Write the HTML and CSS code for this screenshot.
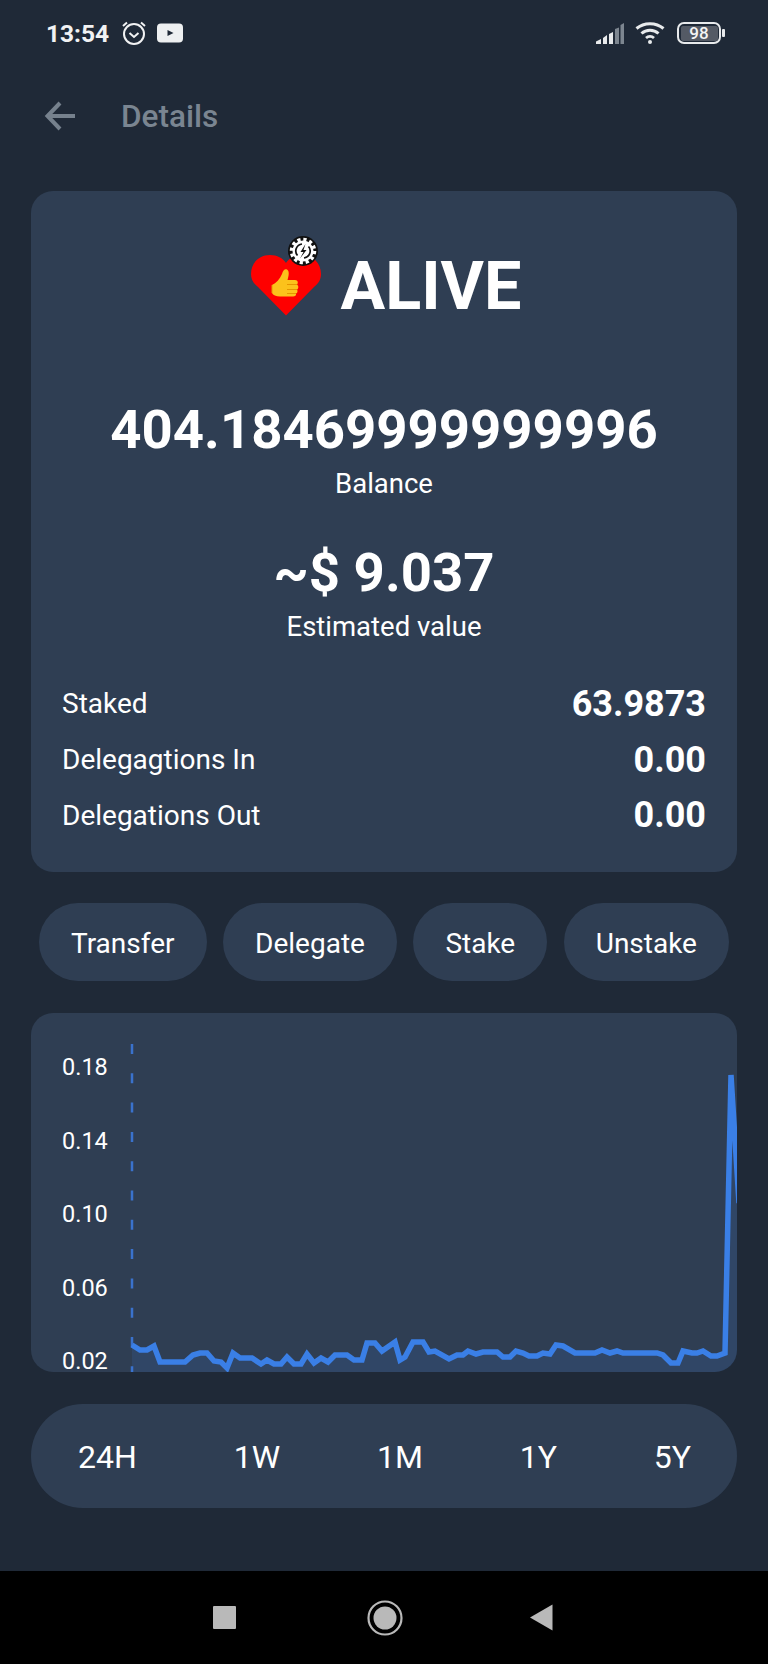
FILE: index.html
```html
<!DOCTYPE html>
<html lang="en">

<head>
    <meta charset="UTF-8">
    <meta name="viewport" content="width=device-width, initial-scale=1.0">
    <title>Details</title>
    <link rel="stylesheet" href="styles.css">
</head>

<body>
    <div class="status-bar">
        <div class="status-left">
            <span class="clock">13:54</span>
            <svg class="alarm-icon" viewBox="0 0 26 26" width="26" height="26">
                <circle cx="13" cy="14" r="10" fill="none" stroke="#f1f2f3" stroke-width="2" />
                <path d="M8.500 13l4.500 4 4.500-4" fill="none" stroke="#f1f2f3" stroke-width="2" />
                <path d="M2 6l4-3.500M24 6l-4-3.500" fill="none" stroke="#f1f2f3" stroke-width="2" />
            </svg>
            <svg class="video-icon" viewBox="0 0 26 20" width="26" height="20">
                <rect width="26" height="19" y="0.500" rx="4" fill="#eef0f1" />
                <path d="M10.500 7l6 3-6 3z" fill="#1f2937" />
            </svg>
        </div>
        <div class="status-right">
            <svg class="signal-icon" viewBox="0 0 28 21" width="28" height="21">
                <path d="M0 21v-2.500l5-2.500v5z" fill="#e8eaec" />
                <path d="M7 21v-6l4-3v9z" fill="#e8eaec" />
                <path d="M13 21V11l4-2v12z" fill="#e8eaec" />
                <path d="M19 21V6l4-1.500V21z" fill="#7d8690" />
                <path d="M24.500 21V2L28 0v21z" fill="#7d8690" />
            </svg>
            <svg class="wifi-icon" viewBox="0 0 30 24" width="30" height="24">
                <path d="M1.500 7.500c7.500-6.500 19.500-6.500 27 0" fill="none" stroke="#e8eaec" stroke-width="3" />
                <path d="M6.500 12.500c4.800-4.500 12.200-4.500 17 0" fill="none" stroke="#e8eaec" stroke-width="3" />
                <path d="M11 17c2.300-2 5.700-2 8 0" fill="none" stroke="#e8eaec" stroke-width="2.800" />
                <circle cx="15" cy="21" r="2" fill="#e8eaec" />
            </svg>
            <div class="battery">
                <div class="battery-body"><span>98</span></div>
                <div class="battery-tip"></div>
            </div>
        </div>
    </div>

    <div class="top-bar">
        <svg class="back-arrow" viewBox="0 0 32 30" width="32" height="30">
            <path d="M31 15H4M16 2L3.500 15 16 28" fill="none" stroke="#76818d" stroke-width="4" />
        </svg>
        <h1>Details</h1>
    </div>

    <div class="card summary">
        <div class="token">
            <div class="token-logo">
                <svg viewBox="0 0 70 63" width="70" height="63">
                    <path d="M35 60.500L7 32C2 28 0 24 0 19 0 8 8 0 19 0c7 0 13 3 16 8 3-5 9-8 16-8 11 0 19 8 19 19 0 5-2 9-7 13z" fill="#fe0000" />
                    <path d="M21 30c4-2 8-6 10-11 1-4 3-5.500 5-4.500 2.500 1.500 2 5.500.5 10.500H44c3 0 3.500 3 2 4.500 2 1.500 1.500 4.500 0 5 1 1.500.5 3.500-1 4 .5 2-1 3-3 3H29c-4 0-7-1.500-8-3.500z" fill="#fcc21b" />
                    <path d="M36 29.500h10M36 34.500h10M36 38.500h9M21 30v8" fill="none" stroke="#e59600" stroke-width="1" />
                </svg>
                <svg class="token-badge" viewBox="0 0 30 30" width="30" height="30">
                    <circle cx="15" cy="15" r="15" fill="#111" />
                    <circle cx="15" cy="15" r="11.500" fill="none" stroke="#fff" stroke-width="3.500" stroke-dasharray="3.200 2.820" />
                    <circle cx="15" cy="15" r="10.500" fill="#fff" />
                    <path d="M9.500 19.500a7 7 0 0 1 4.500-11.500M20.500 10.500a7 7 0 0 1-4.500 11.500" fill="none" stroke="#111" stroke-width="1.700" />
                    <path d="M17.500 8l-5 8h3l-3.500 6.500 6.500-8.500h-3z" fill="#111" />
                </svg>
            </div>
            <span class="token-name">ALIVE</span>
        </div>

        <div class="amount">404.18469999999996</div>
        <div class="amount-label">Balance</div>

        <div class="amount amount-usd">~$ 9.037</div>
        <div class="amount-label">Estimated value</div>

        <div class="stat-list">
            <div class="stat"><span>Staked</span><b>63.9873</b></div>
            <div class="stat"><span>Delegagtions In</span><b>0.00</b></div>
            <div class="stat"><span>Delegations Out</span><b>0.00</b></div>
        </div>
    </div>

    <div class="actions">
        <div class="action-btn">Transfer</div>
        <div class="action-btn">Delegate</div>
        <div class="action-btn">Stake</div>
        <div class="action-btn">Unstake</div>
    </div>

    <div class="card chart">
        <div class="chart-axis">
            <span>0.18</span>
            <span>0.14</span>
            <span>0.10</span>
            <span>0.06</span>
            <span>0.02</span>
        </div>
        <svg class="chart-plot" viewBox="0 0 609 359" width="609" height="359">
            <line x1="4" y1="31" x2="4" y2="359" stroke="#3a72cc" stroke-width="2.500" stroke-dasharray="10 19.300" />
            <polygon fill="#3b82f6" fill-opacity="0.12"
                points="4,359 4,332 12,337 19,337 26,333 32,349 57,349 65,342 72,340 79,340 86,348 93,349 99,355 105,340 112,345 124,345 133,351 139,347 146,351 153,351 159,344 166,351 173,351 179,341 186,350 193,345 200,349 207,342 219,342 226,347 234,347 239,330 247,330 254,338 267,329 272,347 277,344 285,329 295,329 301,339 307,338 321,346 329,342 335,342 340,338 348,341 355,339 369,339 375,344 382,344 388,338 395,340 401,343 409,343 415,340 422,341 428,332 435,333 447,340 467,340 474,337 482,340 489,338 495,340 529,340 535,342 543,350 550,350 555,338 564,340 569,340 575,338 583,343 589,343 597,340 603,64 609,190 609,359" />
            <polyline fill="none" stroke="#3a7fe6" stroke-width="5.500" stroke-linejoin="miter"
                points="4,332 12,337 19,337 26,333 32,349 57,349 65,342 72,340 79,340 86,348 93,349 99,355 105,340 112,345 124,345 133,351 139,347 146,351 153,351 159,344 166,351 173,351 179,341 186,350 193,345 200,349 207,342 219,342 226,347 234,347 239,330 247,330 254,338 267,329 272,347 277,344 285,329 295,329 301,339 307,338 321,346 329,342 335,342 340,338 348,341 355,339 369,339 375,344 382,344 388,338 395,340 401,343 409,343 415,340 422,341 428,332 435,333 447,340 467,340 474,337 482,340 489,338 495,340 529,340 535,342 543,350 550,350 555,338 564,340 569,340 575,338 583,343 589,343 597,340 603,62 611,190" />
        </svg>
    </div>

    <div class="ranges">
        <span>24H</span>
        <span>1W</span>
        <span>1M</span>
        <span>1Y</span>
        <span>5Y</span>
    </div>

    <div class="nav-bar">
        <div class="nav-square"></div>
        <svg class="nav-home" viewBox="0 0 36 36" width="36" height="36">
            <circle cx="18" cy="18" r="16.500" fill="none" stroke="#b9b9b9" stroke-width="2.200" />
            <circle cx="18" cy="18" r="11.500" fill="#b9b9b9" />
        </svg>
        <svg viewBox="0 0 23 27" width="23" height="27">
            <path d="M0 13.500L22.500 0.500V26.500z" fill="#b9b9b9" />
        </svg>
    </div>
</body>

</html>
```

FILE: styles.css
```css
* {
    box-sizing: border-box;
    margin: 0;
    padding: 0;
}

body {
    width: 768px;
    height: 1664px;
    overflow: hidden;
    display: flex;
    flex-direction: column;
    font-family: Roboto, sans-serif;
    background-color: #1f2937;
    color: #fff;
}

/* Status bar */
.status-bar {
    height: 66px;
    padding: 0 43px 0 46px;
    display: flex;
    justify-content: space-between;
    align-items: center;
}

.status-left,
.status-right {
    display: flex;
    align-items: center;
}

.clock {
    font-size: 24.500px;
    font-weight: 700;
    color: #f1f2f3;
    margin-right: 12px;
}

.alarm-icon {
    margin-right: 10px;
}

.signal-icon {
    margin-right: 11px;
}

.wifi-icon {
    margin-right: 12px;
}

.battery {
    display: flex;
    align-items: center;
    gap: 1px;
}

.battery-body {
    width: 44px;
    height: 22px;
    padding: 1.500px;
    border: 2.500px solid #e8eaec;
    border-radius: 7px;
}

.battery-body span {
    display: block;
    height: 100%;
    background-color: #545a65;
    border-radius: 2px;
    font-size: 17px;
    font-weight: 500;
    line-height: 14px;
    text-align: center;
    color: #f4f4f4;
}

.battery-tip {
    width: 3px;
    height: 8px;
    background-color: #e8eaec;
    border-radius: 1px;
}

/* Top bar */
.top-bar {
    height: 100px;
    padding: 0 0 0 44px;
    display: flex;
    align-items: center;
    margin-bottom: 25px;
}

.back-arrow {
    margin-right: 45px;
}

.top-bar h1 {
    font-size: 31.500px;
    font-weight: 500;
    color: #7a8591;
}

/* Cards */
.card {
    margin: 0 31px;
    background-color: #2f3e53;
    border-radius: 22px;
}

.summary {
    padding: 50px 31px 29px;
    text-align: center;
}

.token {
    display: flex;
    justify-content: center;
    align-items: center;
    gap: 20px;
    height: 90px;
    margin-bottom: 66px;
    padding-left: 4px;
}

.token-logo {
    position: relative;
    height: 63px;
}

.token-badge {
    position: absolute;
    top: -19px;
    left: 37px;
}

.token-name {
    font-size: 66.500px;
    font-weight: 700;
}

.amount {
    font-size: 54.500px;
    font-weight: 700;
    line-height: 64px;
}

.amount-usd {
    margin-top: 39px;
}

.amount-label {
    margin-top: 6px;
    font-size: 27.500px;
    line-height: 34px;
}

.stat-list {
    margin-top: 32px;
}

.stat {
    height: 55.700px;
    display: flex;
    justify-content: space-between;
    align-items: center;
    font-size: 28px;
}

.stat b {
    font-size: 36px;
    font-weight: 700;
}

/* Action buttons */
.actions {
    margin: 31px 39px 32px;
    display: flex;
    justify-content: space-between;
}

.action-btn {
    height: 78px;
    padding: 2px 32px 0;
    display: flex;
    align-items: center;
    background-color: #2f3e53;
    border-radius: 39px;
    font-size: 28px;
}

/* Chart */
.chart {
    height: 359px;
    display: flex;
}

.chart-axis {
    width: 97px;
    padding: 44px 0 0 31px;
    display: flex;
    flex-direction: column;
    gap: 52.500px;
    font-size: 23.500px;
}

.chart-axis span {
    line-height: 21px;
}

.chart-plot {
    flex-shrink: 0;
    overflow: hidden;
    border-radius: 0 22px 22px 0;
}

/* Range selector */
.ranges {
    height: 104px;
    margin: 32px 31px 0;
    padding: 2px 46px 0 47px;
    display: flex;
    justify-content: space-between;
    align-items: center;
    background-color: #2f3e53;
    border-radius: 52px;
    font-size: 32px;
}

/* Android nav bar */
.nav-bar {
    margin-top: auto;
    height: 93px;
    padding-left: 213px;
    display: flex;
    align-items: center;
    background-color: #000;
}

.nav-home {
    margin: 0 127px 0 131px;
}

.nav-square {
    width: 23px;
    height: 23px;
    background-color: #b9b9b9;
    border-radius: 1px;
}
```
